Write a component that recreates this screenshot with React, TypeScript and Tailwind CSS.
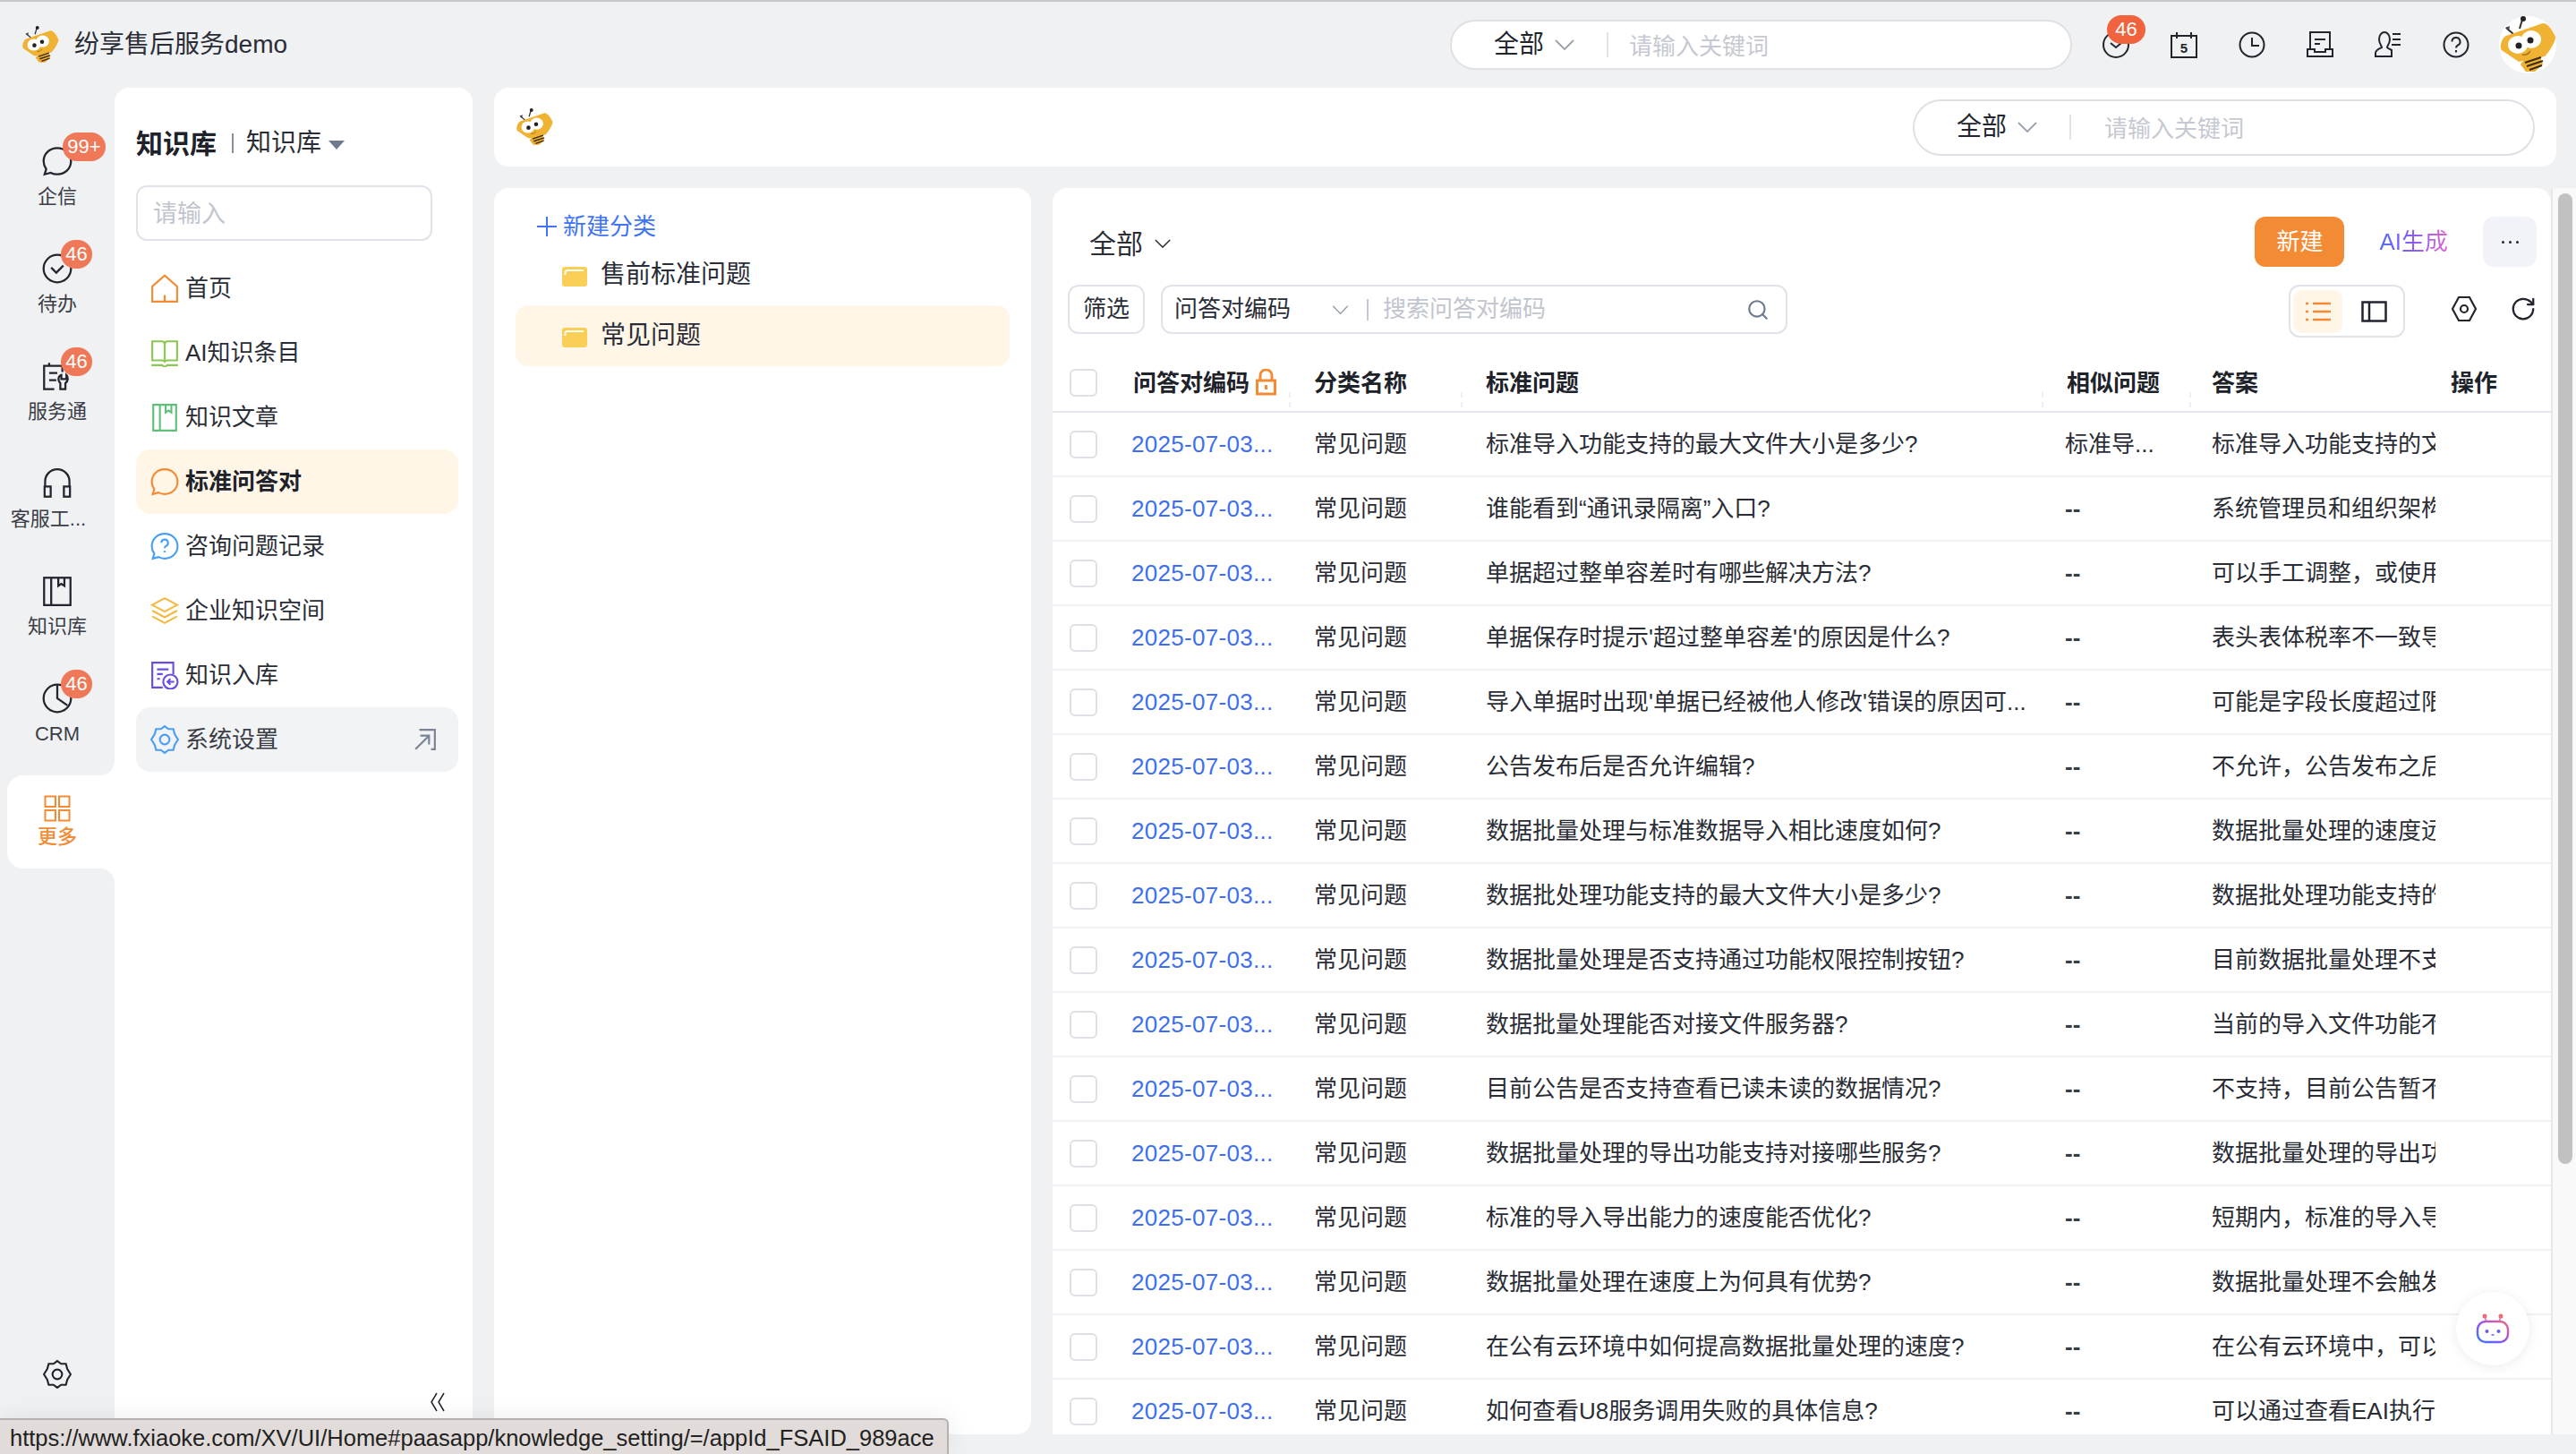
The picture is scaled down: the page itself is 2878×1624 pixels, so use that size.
import React from "react";
import { RotateCw, Search } from "lucide-react";

const rows = [
  ["标准导入功能支持的最大文件大小是多少?", "标准导...", "标准导入功能支持的文件大小"],
  ["谁能看到“通讯录隔离”入口?", "--", "系统管理员和组织架构管理员"],
  ["单据超过整单容差时有哪些解决方法?", "--", "可以手工调整，或使用系统功能"],
  ["单据保存时提示'超过整单容差'的原因是什么?", "--", "表头表体税率不一致导致"],
  ["导入单据时出现'单据已经被他人修改'错误的原因可...", "--", "可能是字段长度超过限制"],
  ["公告发布后是否允许编辑?", "--", "不允许，公告发布之后不能"],
  ["数据批量处理与标准数据导入相比速度如何?", "--", "数据批量处理的速度远高于"],
  ["数据批处理功能支持的最大文件大小是多少?", "--", "数据批处理功能支持的最大"],
  ["数据批量处理是否支持通过功能权限控制按钮?", "--", "目前数据批量处理不支持"],
  ["数据批量处理能否对接文件服务器?", "--", "当前的导入文件功能不支持"],
  ["目前公告是否支持查看已读未读的数据情况?", "--", "不支持，目前公告暂不支持"],
  ["数据批量处理的导出功能支持对接哪些服务?", "--", "数据批量处理的导出功能"],
  ["标准的导入导出能力的速度能否优化?", "--", "短期内，标准的导入导出"],
  ["数据批量处理在速度上为何具有优势?", "--", "数据批量处理不会触发校验"],
  ["在公有云环境中如何提高数据批量处理的速度?", "--", "在公有云环境中，可以通过"],
  ["如何查看U8服务调用失败的具体信息?", "--", "可以通过查看EAI执行日志"],
];

const Bee = ({ size, round = false }: { size: number; round?: boolean }) => (
  <svg width={size} height={size} viewBox="0 0 64 64" className="shrink-0">
    {round && <circle cx="32" cy="32" r="32" fill="#fff" />}
    <path d="M16 20 8 13M23 14 26 4" stroke="#333" strokeWidth="2" />
    <circle cx="27" cy="3" r="3" fill="#222" />
    <path d="M7 13l5-2-1 6z" fill="#445" />
    <path d="M30 46h16l3 8-9 8h-10l-6-8z" fill="#eeb033" />
    <path d="M8 22 49 8c5-1 11 8 14 15 1 3-6 16-12 22L22 51 3 38c-3-3 0-14 5-16z" fill="#f0b232" />
    <ellipse cx="21" cy="32" rx="11" ry="10" fill="#fff" />
    <ellipse cx="36" cy="26" rx="11" ry="10" fill="#fff" />
    <circle cx="22" cy="33" r="3.5" fill="#222" />
    <circle cx="35" cy="27" r="3.5" fill="#222" />
    <path d="M26 43c4 1 7-1 9-4" stroke="#a8741a" strokeWidth="1.5" fill="none" />
    <path d="M29 52 47 46M31 56 49 50M34 60 48 55" stroke="#3b2a14" strokeWidth="2.2" />
  </svg>
);

const Stroke = ({ size, box = 30, className, children }: { size: number; box?: number; className?: string; children: React.ReactNode }) => (
  <svg width={size} height={size} viewBox={`0 0 ${box} ${box}`} fill="none" stroke="currentColor" strokeWidth="2" className={`shrink-0 ${className ?? ""}`}>
    {children}
  </svg>
);

// thin wide chevron used by the scoped search boxes
const Chev = ({ w, className }: { w: number; className?: string }) => (
  <svg width={w} height={Math.round(w * 0.55)} viewBox="0 0 22 12" fill="none" stroke="currentColor" strokeWidth="1.800" className={`shrink-0 ${className ?? ""}`}>
    <path d="M1 1l10 10L21 1" />
  </svg>
);

const ChatPath = "M15 2c7.7 0 13.5 5.8 13.5 13S22.700 28 15 28c-2.500 0-4.600-.6-6.500-1.600L2.500 28l1.600-5.200C2.600 20.700 1.500 18 1.500 15 1.500 7.800 7.300 2 15 2z";

const railItems: { label: string; badge?: string; icon: React.ReactNode }[] = [
  { label: "企信", badge: "99+", icon: <path d={ChatPath} /> },
  {
    label: "待办",
    badge: "46",
    icon: (
      <>
        <circle cx="15" cy="15" r="13.500" />
        <path d="M9 14l5 5 7-7" />
      </>
    ),
  },
  {
    label: "服务通",
    badge: "46",
    icon: (
      <>
        <path d="M12 28H2V5h18v6M7 2v4M7 12h8M7 19h7" />
        <path d="M19 14c-3 1-4 5-1 8v6h5v-6c3-2 3-6 1-8v4h-5z" />
      </>
    ),
  },
  {
    label: "客服工...",
    icon: (
      <>
        <path d="M3 18v-5a12 12 0 0 1 24 0v5" />
        <rect x="2.500" y="18" width="6" height="10" />
        <rect x="21.500" y="18" width="6" height="10" />
      </>
    ),
  },
  {
    label: "知识库",
    icon: (
      <>
        <rect x="2" y="2" width="26" height="27" />
        <path d="M9 2v27M16 2v8l3-2 3 2V2" />
      </>
    ),
  },
  {
    label: "CRM",
    badge: "46",
    icon: (
      <>
        <circle cx="15" cy="15" r="13.500" />
        <path d="M15 2v13l10 7" />
      </>
    ),
  },
];

const GearPath = "M15 1l4 3h5l1.500 5.500L29 15l-3.500 5.500L24 26h-5l-4 3-4-3H6l-1.500-5.500L1 15l3.500-5.500L6 4h5z";

const menu: { label: string; icon: React.ReactNode; color: string; active?: boolean; link?: boolean }[] = [
  { label: "首页", color: "text-[#f38b34]", icon: <path d="M2 13 15 1.500 28 13v16H2zM15 22v7" /> },
  {
    label: "AI知识条目",
    color: "text-[#8cc653]",
    icon: <path d="M2 3h10c2 0 3 1 3 3 0-2 1-3 3-3h10v20H18c-2 0-3 1-3 2 0-1-1-2-3-2H2zM15 6v19M1 28h11l3 2 3-2h11" />,
  },
  {
    label: "知识文章",
    color: "text-[#5fc07a]",
    icon: <path d="M3 2h24v27H3zM10 2v27M16 2v8l3-2 3 2V2" />,
  },
  { label: "标准问答对", color: "text-[#f38b34]", active: true, icon: <path d={ChatPath} /> },
  {
    label: "咨询问题记录",
    color: "text-[#4a9ff5]",
    icon: (
      <>
        <path d={ChatPath} />
        <path d="M11.500 11.500a3.500 3.500 0 1 1 5 3.200c-1 .6-1.500 1.200-1.500 2.300M15 20v1.500" />
      </>
    ),
  },
  {
    label: "企业知识空间",
    color: "text-[#f5b942]",
    icon: <path d="M15 2 28 9l-13 7L2 9zM2 15l13 7 13-7M2 21l13 7 13-7" />,
  },
  {
    label: "知识入库",
    color: "text-[#6a4de0]",
    icon: (
      <>
        <path d="M13 28H2V2h22v12M7 9h12M7 14h6M7 19h3" />
        <circle cx="21" cy="22" r="7.500" />
        <path d="M25 22h-7M21 19l-3 3 3 3" />
      </>
    ),
  },
  {
    label: "系统设置",
    color: "text-[#4a9ff5]",
    link: true,
    icon: (
      <>
        <path d={GearPath} />
        <circle cx="15" cy="15" r="5" />
      </>
    ),
  },
];

const Badge = ({ text }: { text: string }) => (
  <span
    className={`absolute top-[-15px] h-[32px] rounded-full bg-[#ee7858] text-white text-[22px] leading-[32px] text-center ${
      text === "99+" ? "left-[23px] w-[48px]" : "left-[21px] w-[35px]"
    }`}
  >
    {text}
  </span>
);

const Rail = () => (
  <div className="w-[128px] shrink-0 flex flex-col pt-[48px]">
    {railItems.map((item) => (
      <div key={item.label} className="h-[120px] pt-[17px] flex flex-col items-center text-[#23252e]">
        <div className="relative w-[34px] h-[34px]">
          <Stroke size={34}>{item.icon}</Stroke>
          {item.badge && <Badge text={item.badge} />}
        </div>
        <span className={`mt-[11px] text-[22px] leading-[24px] text-[#3a3d46] whitespace-nowrap ${item.label.endsWith("...") ? "pr-[20px]" : ""}`}>
          {item.label}
        </span>
      </div>
    ))}
    <div className="relative ml-[8px] w-[120px] h-[104px] rounded-l-[18px] bg-white pt-[22px] pr-[8px] flex flex-col items-center text-[#f38b34]">
      <div className="absolute right-0 top-[-16px] w-[16px] h-[16px] bg-white">
        <div className="w-full h-full rounded-br-[16px] bg-[#f0f1f3]" />
      </div>
      <div className="absolute right-0 bottom-[-16px] w-[16px] h-[16px] bg-white">
        <div className="w-full h-full rounded-tr-[16px] bg-[#f0f1f3]" />
      </div>
      <Stroke size={30}>
        <rect x="1.500" y="1.500" width="11.500" height="11.500" />
        <rect x="17" y="1.500" width="11.500" height="11.500" />
        <rect x="1.500" y="17" width="11.500" height="11.500" />
        <rect x="17" y="17" width="11.500" height="11.500" />
      </Stroke>
      <span className="mt-[5px] text-[22px] leading-[24px] font-medium">更多</span>
    </div>
    <div className="mt-auto mb-[73px] self-center text-[#23252e]">
      <Stroke size={32}>
        <path d={GearPath} />
        <circle cx="15" cy="15" r="5" />
      </Stroke>
    </div>
  </div>
);

const Sidebar = () => (
  <div className="w-[400px] shrink-0 bg-white rounded-t-[16px] flex flex-col">
    <div className="mt-[42px] h-[40px] ml-[24px] flex items-center">
      <span className="text-[30px] font-bold text-[#20222a]">知识库</span>
      <span className="ml-[17px] w-[2px] h-[22px] bg-[#8a8f9c]" />
      <span className="ml-[14px] text-[28px] text-[#2a2d36]">知识库</span>
      <span className="ml-[8px] mt-[3px] w-0 h-0 border-l-[9px] border-r-[9px] border-t-[10px] border-l-transparent border-r-transparent border-t-[#6f7a8f]" />
    </div>
    <div className="mt-[27px] ml-[24px] w-[331px] h-[62px] rounded-[12px] border-2 border-[#e2e3ea] flex items-center pl-[17px] pt-[2px] text-[27px] text-[#c1c5ce]">
      请输入
    </div>
    <div className="mt-[17px] ml-[24px] w-[360px] flex flex-col">
      {menu.map((item) => (
        <div
          key={item.label}
          className={`h-[72px] rounded-[16px] flex items-center pl-[16px] pr-[24px] gap-[7px] text-[26px] ${
            item.active ? "bg-[#fff6e8] font-bold text-[#20222a]" : item.link ? "bg-[#f2f3f5] text-[#3a3d46]" : "text-[#2a2d36]"
          }`}
        >
          <span className={item.color}>
            <Stroke size={32}>{item.icon}</Stroke>
          </span>
          <span>{item.label}</span>
          {item.link && (
            <span className="ml-auto text-[#7b8494]">
              <Stroke size={26} box={24}>
                <path d="M6 2h16v20h-4M2 22 16 8M7 8h9v9" />
              </Stroke>
            </span>
          )}
        </div>
      ))}
    </div>
    <div className="mt-auto self-end mr-[29px] mb-[47px] text-[#23252e]">
      <svg width="20" height="22" viewBox="0 0 20 22" fill="none" stroke="currentColor" strokeWidth="1.500">
        <path d="M9 1 3 11l6 10M17 1l-6 10 6 10" />
      </svg>
    </div>
  </div>
);

const Scoped = ({ height, wide }: { height: string; wide?: boolean }) => (
  <div className={`flex items-center rounded-full border-2 border-[#dfe0e6] bg-white w-[695px] ${height}`}>
    <span className="ml-[47px] text-[28px] text-[#23252e] w-[56px] whitespace-nowrap">全部</span>
    <Chev w={22} className="ml-[12px] text-[#9aa0ac]" />
    <span className="ml-[36px] w-[2px] h-[28px] bg-[#e2e3ea]" />
    <span className={`${wide ? "ml-[37px]" : "ml-[23px]"} text-[26px] text-[#c6c9d1] pt-[4px]`}>请输入关键词</span>
  </div>
);

const TopIcons = () => (
  <div className="flex items-center gap-[46px] text-[#23252e]">
    <div className="relative w-[30px] h-[30px]">
      <Stroke size={30}>
        <circle cx="15" cy="15" r="14" />
        <path d="M9 13l6 5 6-5" />
      </Stroke>
      <span className="absolute left-[5px] top-[-18px] w-[43px] h-[32px] rounded-full bg-[#f0633e] text-white text-[22px] leading-[32px] text-center">
        46
      </span>
    </div>
    <Stroke size={30}>
      <path d="M1 5h28v24H1zM7 1v7M23 1v7" />
      <text x="15" y="24" textAnchor="middle" fontSize="15" fontWeight="700" fill="currentColor" stroke="none">
        5
      </text>
    </Stroke>
    <Stroke size={30}>
      <circle cx="15" cy="15" r="13.500" />
      <path d="M15 7v9h8" />
    </Stroke>
    <Stroke size={30}>
      <path d="M4 20V1h22v19M9 9h12M9 14h6M1 20h8v3h12v-3h8v8H1z" />
    </Stroke>
    <Stroke size={30}>
      <path d="M1 28v-4c0-3 5-5 7-6 0-2-3-4-3-9 0-5 3-8 6-8s6 3 6 8c0 5-3 7-3 9 1 1 3 2 5 3v7zM20 3h9M20 9h9M19 15h10" />
    </Stroke>
    <Stroke size={30}>
      <circle cx="15" cy="15" r="13.500" />
      <path d="M10.500 11.500a4.500 4.500 0 1 1 6.500 4c-1.300.7-2 1.500-2 3M15 21v2.500" />
    </Stroke>
  </div>
);

const Folder = () => (
  <svg width="28" height="22" viewBox="0 0 28 22" className="shrink-0 mt-[4px]">
    <rect width="28" height="22" rx="3" fill="#f9cf58" />
    <path d="M3.500 9V6a2 2 0 0 1 2-2H24" fill="none" stroke="#fff" strokeWidth="2" />
  </svg>
);

const Tree = () => (
  <div className="w-[600px] shrink-0 bg-white rounded-[16px] pt-[28px]">
    <div className="h-[30px] ml-[47px] flex items-center gap-[6px] text-[26px] text-[#3f74f5]">
      <svg width="24" height="24" viewBox="0 0 24 24" fill="none" stroke="currentColor" strokeWidth="2" className="shrink-0">
        <path d="M12 1v22M1 12h22" />
      </svg>
      新建分类
    </div>
    <div className="mt-[5px] mx-[24px] flex flex-col">
      <div className="h-[68px] rounded-[14px] pl-[52px] flex items-center gap-[15px] text-[28px] text-[#2a2d36]">
        <Folder />
        售前标准问题
      </div>
      <div className="h-[68px] rounded-[14px] pl-[52px] flex items-center gap-[15px] text-[28px] text-[#2a2d36] bg-[#fff6e8]">
        <Folder />
        常见问题
      </div>
    </div>
  </div>
);

const Check = () => <span className="block w-[31px] h-[31px] rounded-[6px] border-2 border-[#dfe0e6] bg-white" />;

const Table = () => (
  <div>
    <div className="relative h-[84px] pt-[18px] flex items-center border-b-2 border-[#e6e7ee] text-[26px] font-bold text-[#20222a]">
      <div className="w-[88px] pl-[19px]">
        <Check />
      </div>
      <div className="w-[204px] flex items-center gap-[7px] pl-[2px] pt-[2px]">
        问答对编码
        <svg width="23" height="30" viewBox="0 0 23 30" fill="none" stroke="#f38b34" strokeWidth="3" className="-mt-[2px]">
          <rect x="1.500" y="13" width="20" height="15" />
          <path d="M5 13V7a6.500 6 0 0 1 13 0v6M11.500 18v5" />
        </svg>
      </div>
      <div className="w-[192px] pt-[2px]">分类名称</div>
      <div className="w-[647px] pt-[2px]">标准问题</div>
      <div className="w-[164px] pl-[2px] pt-[2px]">相似问题</div>
      <div className="w-[267px] pt-[2px]">答案</div>
      <div className="pt-[2px]">操作</div>
      <span className="absolute left-[264px] top-[61px] h-[17px] border-l-2 border-dashed border-[#eef0f8]" />
      <span className="absolute left-[456px] top-[61px] h-[17px] border-l-2 border-dashed border-[#eef0f8]" />
      <span className="absolute left-[1105px] top-[61px] h-[17px] border-l-2 border-dashed border-[#eef0f8]" />
      <span className="absolute left-[1270px] top-[61px] h-[17px] border-l-2 border-dashed border-[#eef0f8]" />
    </div>
    {rows.map(([question, similar, answer], i) => (
      <div key={i} className="h-[72px] flex items-center border-b-2 border-[#f0f0f5] text-[26px] text-[#2a2d36] whitespace-nowrap">
        <div className="w-[88px] pl-[19px]">
          <Check />
        </div>
        <div className="w-[204px] pt-[1px] text-[#3d6ff0] tracking-[0.3px]">2025-07-03...</div>
        <div className="w-[192px] pt-[1px]">常见问题</div>
        <div className="w-[647px] pt-[1px]">{question}</div>
        <div className={`w-[164px] pt-[1px] ${similar === "--" ? "font-bold text-[#3a3d46]" : ""}`}>{similar}</div>
        <div className="w-[250px] pt-[1px] overflow-hidden">{answer}</div>
      </div>
    ))}
  </div>
);

const Main = () => (
  <div className="w-[1674px] shrink-0 bg-white rounded-t-[16px] pt-[32px] overflow-hidden">
    <div className="h-[56px] pl-[41px] pr-[16px] flex items-center">
      <span className="text-[30px] text-[#2a2d36] pt-[4px]">全部</span>
      <Chev w={18} className="ml-[13px] mt-[4px] text-[#2a2d36]" />
      <button className="ml-auto w-[100px] h-[56px] rounded-[12px] bg-[#f38b34] text-white text-[26px]">新建</button>
      <span className="ml-[39px] text-[26px] bg-linear-to-r from-[#4f6df5] via-[#8a5cf0] to-[#e05fd0] bg-clip-text text-transparent">AI生成</span>
      <button className="ml-[39px] w-[60px] h-[56px] rounded-[12px] bg-[#f2f3f8] flex items-center justify-center gap-[5px]">
        <span className="w-[3px] h-[3px] rounded-full bg-[#23252e]" />
        <span className="w-[3px] h-[3px] rounded-full bg-[#23252e]" />
        <span className="w-[3px] h-[3px] rounded-full bg-[#23252e]" />
      </button>
    </div>
    <div className="mt-[20px] h-[59px] pl-[17px] pr-[16px] flex items-start">
      <div className="w-[86px] h-[55px] rounded-[12px] border-2 border-[#e2e3ea] flex items-center justify-center text-[26px] text-[#2a2d36]">筛选</div>
      <div className="ml-[18px] w-[700px] h-[55px] rounded-[12px] border-2 border-[#e2e3ea] flex items-center pl-[13px] pr-[18px] text-[26px]">
        <span className="w-[130px] text-[#2a2d36]">问答对编码</span>
        <Chev w={19} className="ml-[46px] text-[#9aa0ac]" />
        <span className="ml-[20px] w-[2px] h-[24px] bg-[#c5c8d2]" />
        <span className="ml-[16px] text-[#c1c5ce]">搜索问答对编码</span>
        <Search className="ml-auto w-[26px] h-[26px] text-[#6f7a8f]" strokeWidth={2} />
      </div>
      <div className="ml-auto w-[130px] h-[59px] rounded-[12px] border-2 border-[#e2e3ea] flex items-center pl-[3px]">
        <div className="w-[55px] h-[48px] rounded-[10px] bg-[#fff6e8] flex items-center justify-center text-[#f38b34]">
          <svg width="30" height="24" viewBox="0 0 30 24" fill="none" stroke="currentColor" strokeWidth="2.500">
            <path d="M9 3h20M9 12h20M9 21h20M1 3h3M1 12h3M1 21h3" />
          </svg>
        </div>
        <div className="ml-[21px] text-[#23252e]">
          <svg width="29" height="24" viewBox="0 0 29 24" fill="none" stroke="currentColor" strokeWidth="2.500">
            <rect x="1.500" y="1.500" width="26" height="21" />
            <path d="M9 1.500v21" />
          </svg>
        </div>
      </div>
      <div className="ml-[51px] mt-[12px] text-[#23252e]">
        <svg width="30" height="30" viewBox="0 0 30 30" fill="none" stroke="currentColor" strokeWidth="2.200">
          <path d="M9 2h12l7 13-7 13H9L2 15z" />
          <circle cx="15" cy="15" r="4" />
        </svg>
      </div>
      <RotateCw className="ml-[36px] mt-[12px] w-[30px] h-[30px] text-[#23252e]" strokeWidth={1.800} />
    </div>
    <Table />
  </div>
);

const Robot = () => (
  <div className="absolute left-[2744px] top-[1441px] w-[82px] h-[82px] rounded-full bg-white shadow-[0_2px_14px_rgba(0,0,0,0.08)] flex items-center justify-center">
    <svg width="38" height="34" viewBox="0 0 38 34" fill="none">
      <defs>
        <linearGradient id="robot" x1="0" y1="1" x2="1" y2="0">
          <stop offset="0" stopColor="#2f7bff" />
          <stop offset="0.5" stopColor="#9a4df0" />
          <stop offset="1" stopColor="#ee6a7a" />
        </linearGradient>
      </defs>
      <rect x="2" y="9" width="34" height="23" rx="9" stroke="url(#robot)" strokeWidth="2.400" />
      <path d="M12 9 10 4M26 9l2-5" stroke="#d36bb0" strokeWidth="1.500" />
      <circle cx="10" cy="3" r="2.500" fill="#ee6a7a" />
      <circle cx="28" cy="3" r="2.500" fill="#ee6a7a" />
      <circle cx="12.500" cy="20" r="2" fill="#6a5cf0" />
      <circle cx="25.500" cy="20" r="2" fill="#6a5cf0" />
      <path d="M17.500 24h3" stroke="#6a5cf0" strokeWidth="1.500" />
    </svg>
  </div>
);

const App = () => {
  return (
    <div className="relative w-[2878px] h-[1624px] overflow-hidden bg-[#f0f1f3] border-t-2 border-[#c8c9cc] [font-family:'Liberation_Sans','Noto_Sans_CJK_SC',sans-serif]">
      {/* Top bar */}
      <div className="h-[96px] flex items-center pl-[24px] pr-[22px]">
        <Bee size={42} />
        <span className="ml-[17px] text-[28px] text-[#2a2d36]">纷享售后服务demo</span>
        <div className="ml-auto">
          <Scoped height="h-[56px]" />
        </div>
        <div className="ml-[34px]">
          <TopIcons />
        </div>
        <div className="ml-[33px]">
          <Bee size={64} round />
        </div>
      </div>

      <div className="h-[1526px] flex">
        <Rail />
        <Sidebar />
        <div className="ml-[24px] flex-1 flex flex-col">
          <div className="w-[2304px] h-[88px] rounded-[16px] bg-white flex items-center pl-[24px] pr-[24px]">
            <Bee size={42} />
            <div className="ml-auto">
              <Scoped height="h-[63px]" wide />
            </div>
          </div>
          <div className="mt-[24px] h-[1392px] flex bg-[#f0f1f3]">
            <Tree />
            <div className="ml-[24px] flex">
              <Main />
            </div>
            <div className="flex-1 border-l-2 border-[#e6e6ec] bg-[#f9f9f9] pt-[6px]">
              <div className="ml-[6px] w-[16px] h-[1084px] rounded-full bg-[#c1c1c1]" />
            </div>
          </div>
        </div>
      </div>

      <Robot />

      {/* Browser status bubble */}
      <div className="absolute left-0 bottom-0 w-[1060px] h-[40px] rounded-tr-[6px] border-t-2 border-r-2 border-[#b4b0ad] bg-[#e1dcd9] pl-[11px] text-[25.5px] leading-[40px] text-[#222] whitespace-nowrap shadow-[0_0_30px_rgba(0,0,0,0.08)]">
        https://www.fxiaoke.com/XV/UI/Home#paasapp/knowledge_setting/=/appId_FSAID_989ace
      </div>
    </div>
  );
};

export default App;
